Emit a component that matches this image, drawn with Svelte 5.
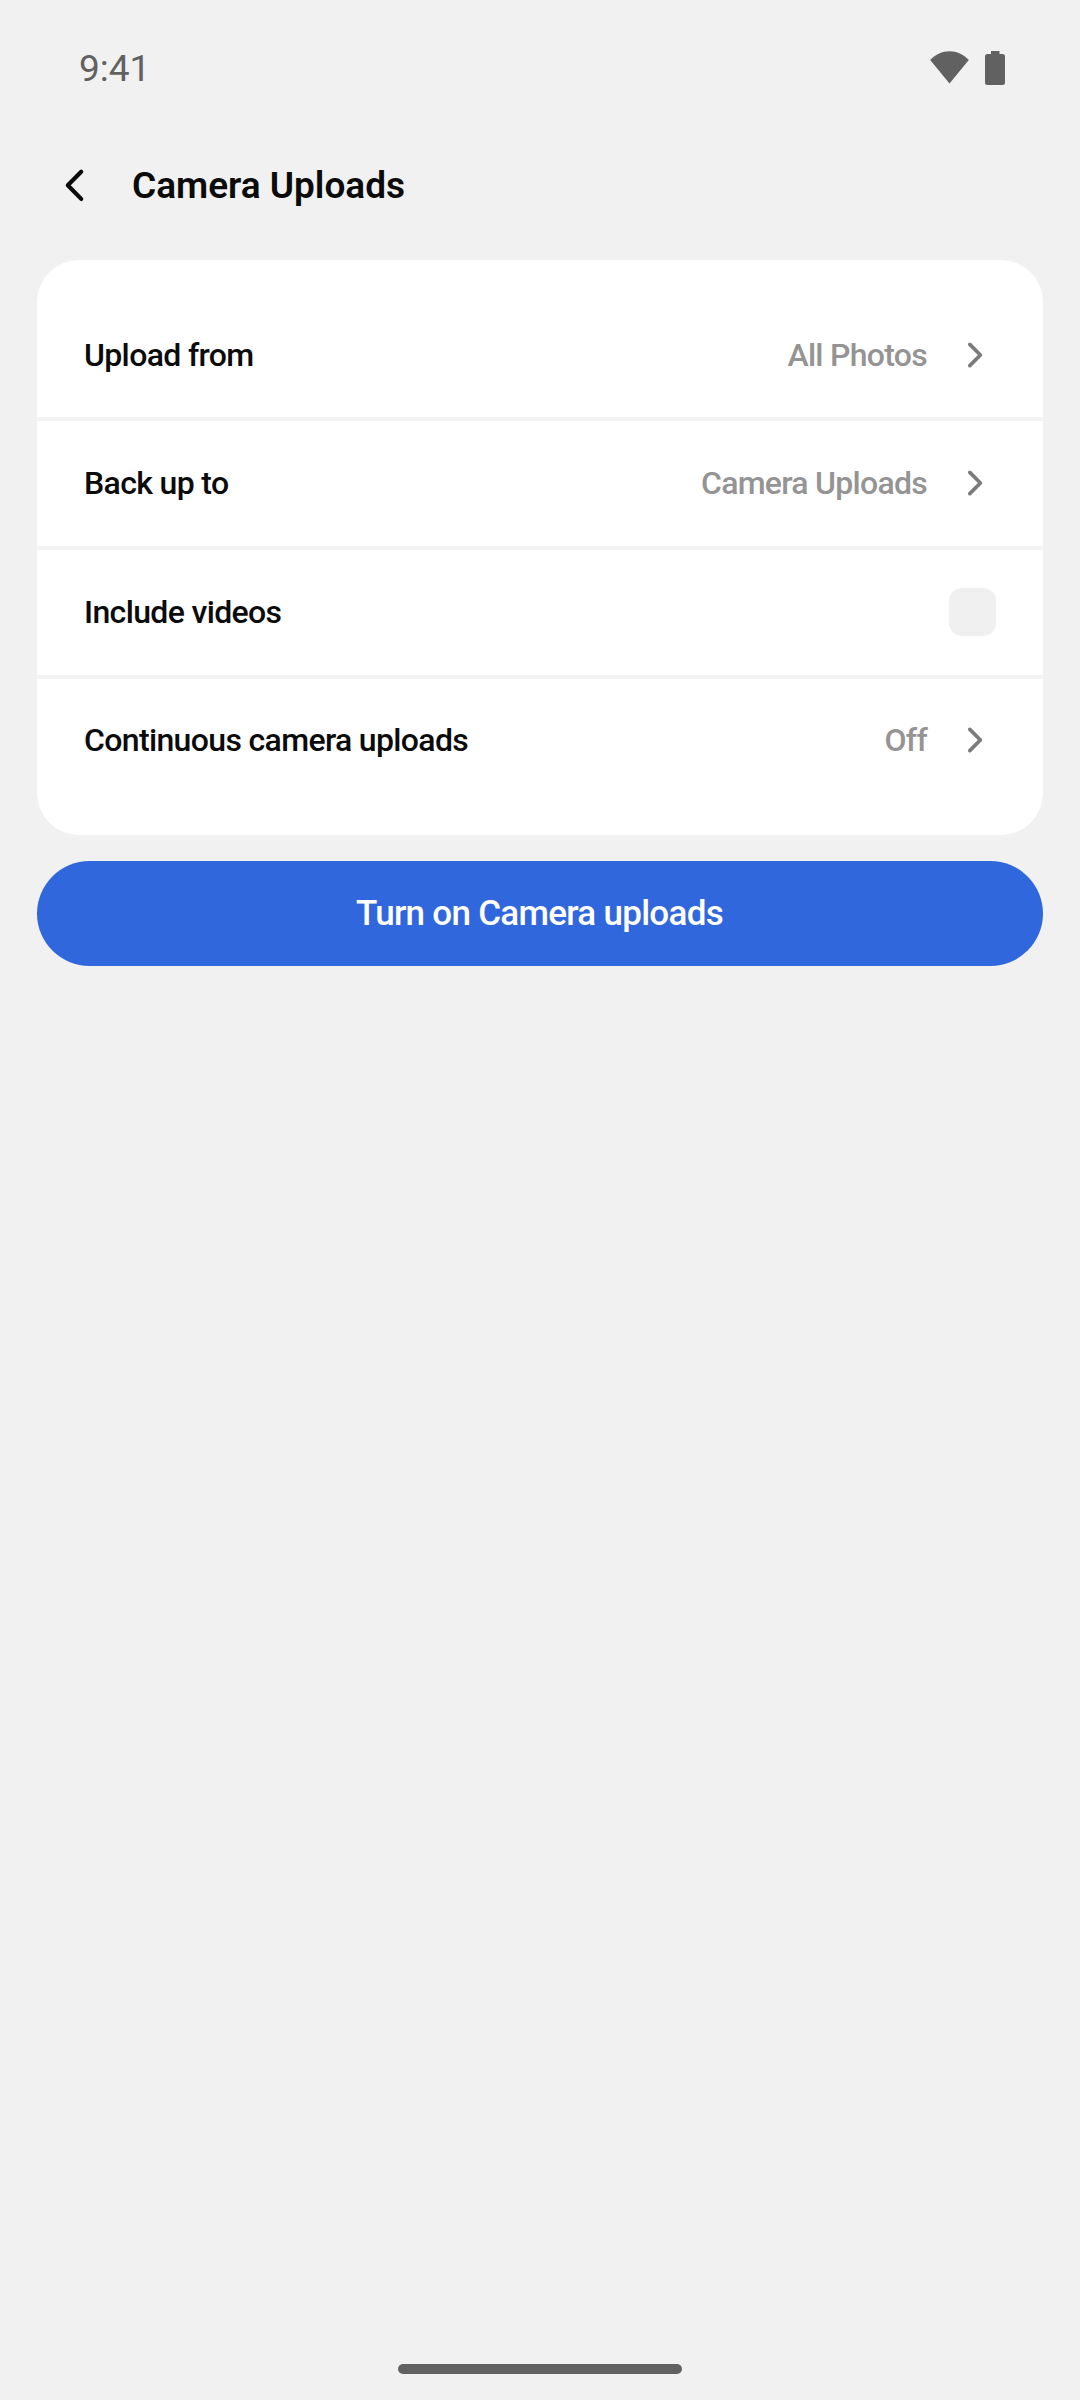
<script>
  const rows = [
    { label: 'Upload from', value: 'All Photos' },
    { label: 'Back up to', value: 'Camera Uploads' },
    { label: 'Include videos', checkbox: true },
    { label: 'Continuous camera uploads', value: 'Off' }
  ];
  let includeVideos = $state(false);
</script>

<div class="screen">
  <header class="status">
    <span class="time">9:41</span>
    <div class="indicators">
      <svg class="wifi" width="40" height="34" viewBox="0 0 40 34">
        <path d="M0.2 9C5.600 3.500 12.300 0.300 19.500 0.300S33.400 3.500 38.800 9L19.500 32.600Z" fill="#616161" />
      </svg>
      <svg class="battery" width="20" height="34" viewBox="0 0 20 34">
        <path d="M6 0h8.500v3H17.500a2.500 2.500 0 0 1 2.500 2.500V31.500a2.500 2.500 0 0 1-2.500 2.500H2.500A2.500 2.500 0 0 1 0 31.500V5.500A2.500 2.500 0 0 1 2.500 3H6z" fill="#616161" />
      </svg>
    </div>
  </header>

  <nav class="bar">
    <button class="back" aria-label="Back">
      <svg width="24" height="36" viewBox="0 0 24 36">
        <path d="M19.200 4.700L5.800 18.300L19.200 31.900" fill="none" stroke="#0b0b0b" stroke-width="4.200" stroke-linecap="round" stroke-linejoin="round" />
      </svg>
    </button>
    <h1>Camera Uploads</h1>
  </nav>

  <main>
    <section class="card">
      {#each rows as row}
        <div class="row">
          <span class="label">{row.label}</span>
          {#if row.checkbox}
            <button
              class="check"
              role="checkbox"
              aria-checked={includeVideos}
              aria-label={row.label}
              onclick={() => (includeVideos = !includeVideos)}
            ></button>
          {:else}
            <span class="value">{row.value}</span>
            <svg class="chevron" width="20" height="30" viewBox="0 0 20 30">
              <path d="M4.800 4.400L15.400 15L4.800 25.600" fill="none" stroke="#7c7c7c" stroke-width="3.700" stroke-linecap="round" stroke-linejoin="round" />
            </svg>
          {/if}
        </div>
      {/each}
    </section>
    <button class="cta">Turn on Camera uploads</button>
  </main>

  <footer><div class="handle"></div></footer>
</div>

<style>
  :global(body) {
    background: #f1f1f1;
  }
  .screen {
    box-sizing: border-box;
    width: 1080px;
    height: 2400px;
    display: flex;
    flex-direction: column;
    background: #f1f1f1;
    color: #0b0b0b;
    font-family: Roboto, sans-serif;
  }
  button {
    border: 0;
    padding: 0;
    font: inherit;
    color: inherit;
    background: none;
  }
  .status {
    height: 136px;
    box-sizing: border-box;
    padding: 0 75px 0 79px;
    display: flex;
    justify-content: space-between;
  }
  .time {
    margin-top: 47px;
    font-size: 37px;
    line-height: 44px;
    color: #616161;
  }
  .indicators {
    display: flex;
    gap: 15px;
    padding-top: 51px;
  }
  .bar {
    height: 124px;
    padding-left: 62px;
    display: flex;
    align-items: flex-start;
  }
  .back {
    margin-top: 31px;
    height: 36px;
  }
  .back svg,
  .chevron {
    display: block;
  }
  h1 {
    margin: 28px 0 0 46px;
    font-size: 37px;
    line-height: 44px;
    font-weight: 600;
    letter-spacing: -0.02px;
  }
  main {
    padding: 0 37px;
    flex: 1;
    display: flex;
    flex-direction: column;
    gap: 26px;
  }
  .card {
    box-sizing: border-box;
    height: 575px;
    padding: 33px 0;
    border-radius: 42px;
    background: #fff;
  }
  .row {
    box-sizing: border-box;
    height: 129px;
    display: flex;
    align-items: center;
    padding: 0 47px 1px;
    border-bottom: 4px solid #f3f3f3;
    font-size: 32px;
    line-height: 38px;
    font-weight: 500;
    letter-spacing: -0.65px;
  }
  .row:first-child {
    height: 128px;
    padding-bottom: 0;
  }
  .row:last-child {
    height: 123px;
    border-bottom: 0;
  }
  .label {
    flex: 1;
  }
  .value {
    color: #949494;
    letter-spacing: -0.72px;
  }
  .chevron {
    margin: 0 11px 0 38px;
  }
  .check {
    width: 47px;
    height: 48px;
    border-radius: 13px;
    background: #f0f0f0;
  }
  .cta {
    height: 105px;
    padding-right: 1px;
    border-radius: 53px;
    background: #3067dd;
    color: #fff;
    font-size: 35px;
    line-height: 42px;
    font-weight: 500;
    letter-spacing: -0.72px;
  }
  footer {
    height: 36px;
    display: flex;
    justify-content: center;
    align-items: flex-start;
  }
  .handle {
    width: 284px;
    height: 10px;
    border-radius: 5px;
    background: #616161;
  }
</style>
